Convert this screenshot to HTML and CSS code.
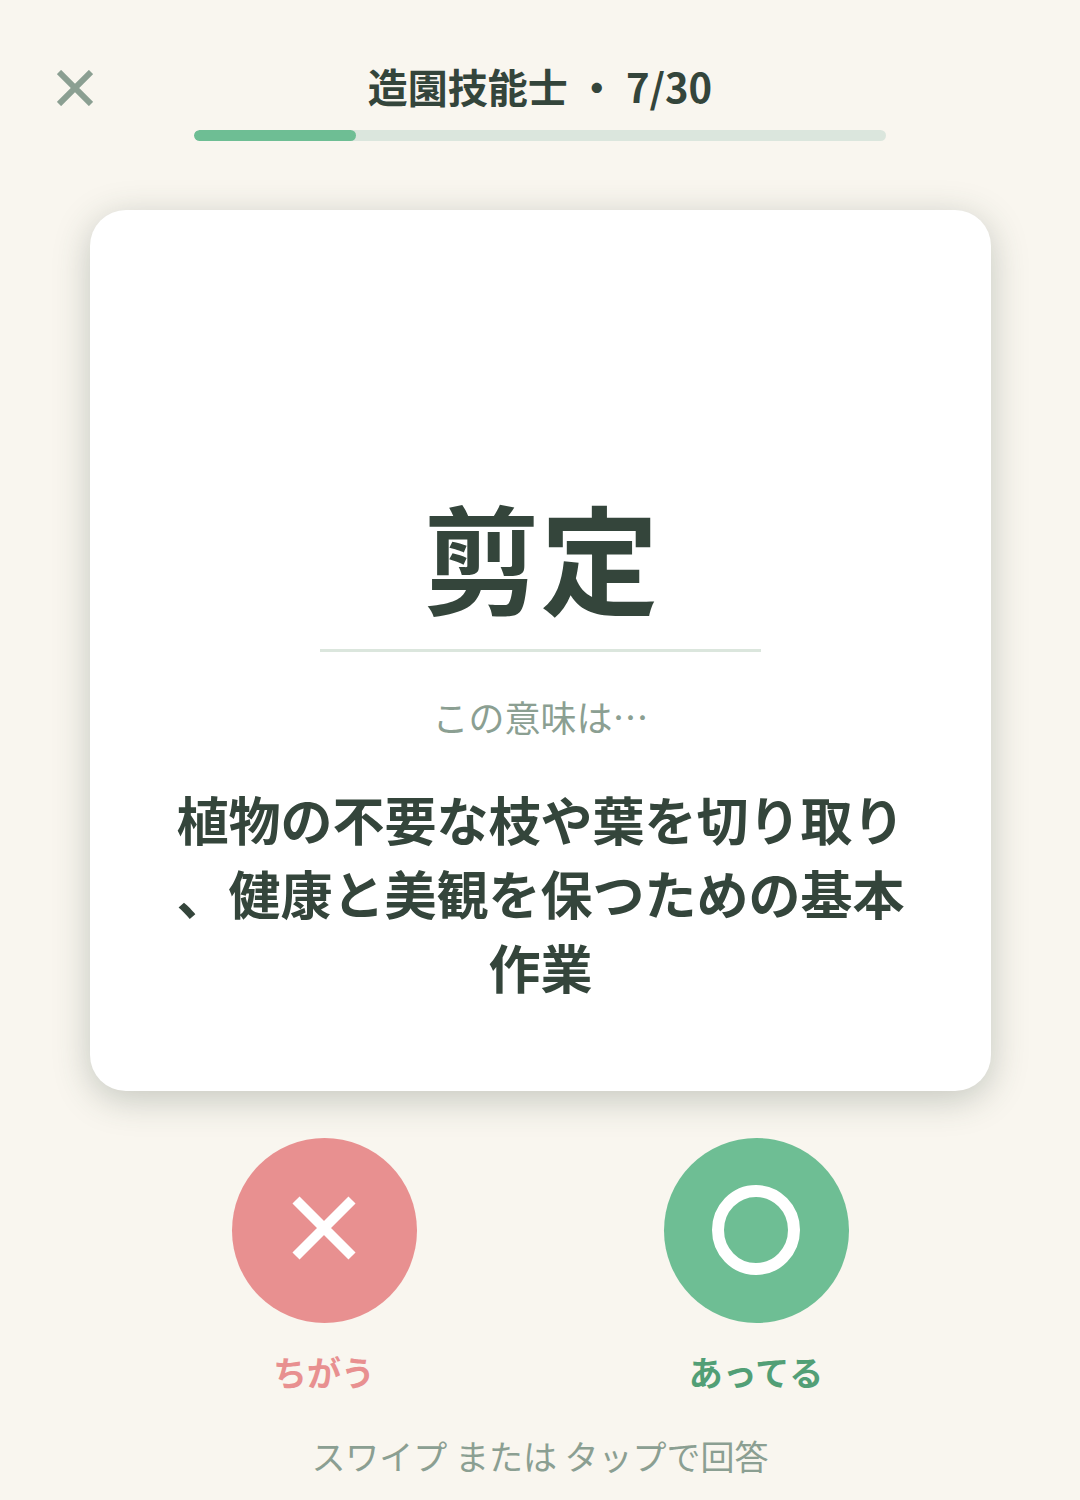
FILE: index.html
```html
<!DOCTYPE html>
<html lang="ja">
<head>
  <meta charset="UTF-8" />
  <meta name="viewport" content="width=device-width, initial-scale=1.0">
  <title>造園技能士</title>
  <link rel="stylesheet" href="styles.css">
</head>
<body>
  <header class="topbar">
    <button type="button" class="close" aria-label="閉じる">
      <svg viewBox="0 0 36 36" width="36" height="36" aria-hidden="true">
        <path d="M2 2 34 34M34 2 2 34" fill="none" stroke="currentColor" stroke-width="6"/>
      </svg>
    </button>
    <div class="status">
      <h1 id="deck-title">造園技能士 ・ 7/30</h1>
      <progress class="bar" value="7" max="30" aria-labelledby="deck-title"></progress>
    </div>
  </header>

  <main class="card">
    <h2 class="word">剪定</h2>
    <hr class="rule">
    <p class="prompt">この意味は…</p>
    <p class="meaning">植物の不要な枝や葉を切り取り、健康と美観を保つための基本作業</p>
  </main>

  <div class="answers">
    <button type="button" class="answer wrong">
      <span class="circle">
        <svg viewBox="0 0 92 92" width="92" height="92" aria-hidden="true">
          <path d="M18 15 74 71M74 15 18 71" fill="none" stroke="currentColor" stroke-width="10"/>
        </svg>
      </span>
      <span class="label">ちがう</span>
    </button>
    <button type="button" class="answer right">
      <span class="circle">
        <svg viewBox="0 0 92 92" width="92" height="92" aria-hidden="true">
          <ellipse cx="46" cy="45" rx="38" ry="39" fill="none" stroke="currentColor" stroke-width="12"/>
        </svg>
      </span>
      <span class="label">あってる</span>
    </button>
  </div>

  <p class="hint">スワイプ または タップで回答</p>
</body>
</html>
```
FILE: styles.css
```css
* { box-sizing: border-box; }
body {
  margin: 0;
  min-height: 100vh;
  display: flex;
  flex-direction: column;
  background: #f9f6ef;
  color: #34453b;
  font-family: "Noto Sans CJK JP", sans-serif;
}
h1, h2, p { margin: 0; }
button {
  padding: 0;
  border: none;
  background: none;
  font-family: inherit;
  cursor: pointer;
}
svg { display: block; }

.topbar {
  display: grid;
  grid-template-columns: 18% 64% 18%;
  align-items: start;
  padding-top: 58px;
}
.close {
  justify-self: start;
  margin-left: 57px;
  padding: 12px 0;
  color: #8b9f92;
}
.status {
  display: flex;
  flex-direction: column;
  gap: 16px;
}
h1 {
  font-size: 40px;
  line-height: 56px;
  font-weight: 700;
  text-align: center;
}
.bar {
  display: block;
  width: 100%;
  height: 11px;
  appearance: none;
  border: none;
  border-radius: 6px;
  overflow: hidden;
  background: #dbe6dd;
}
.bar::-webkit-progress-bar { background: #dbe6dd; }
.bar::-webkit-progress-value {
  background: #6ebe94;
  border-radius: 6px;
}

.card {
  flex: 1;
  display: flex;
  flex-direction: column;
  align-items: center;
  justify-content: flex-end;
  margin: 69px 89px 0 90px;
  padding: 80px 80px 87px;
  background: #fff;
  border-radius: 36px;
  box-shadow: 0 8px 36px rgba(52, 69, 59, 0.27);
  text-align: center;
}
.word {
  font-size: 118px;
  line-height: 140px;
  font-weight: 700;
}
.rule {
  width: 100%;
  max-width: 441px;
  height: 3px;
  margin: 24px 0 38px;
  border: none;
  background: #dbe6dd;
}
.prompt {
  font-size: 36px;
  line-height: 52px;
  color: #8b9f92;
}
.meaning {
  margin-top: 40px;
  font-size: 52px;
  line-height: 74px;
  font-weight: 700;
  line-break: anywhere;
}

.answers {
  display: grid;
  grid-template-columns: 1fr 1fr;
  margin-top: 47px;
  padding: 0 10%;
}
.answer {
  justify-self: center;
  display: flex;
  flex-direction: column;
  align-items: center;
  gap: 24px;
}
.circle {
  display: grid;
  place-items: center;
  width: 185px;
  height: 185px;
  border-radius: 50%;
}
.label {
  font-size: 34px;
  line-height: 50px;
  font-weight: 700;
}
.wrong { color: #e89090; }
.wrong .circle { background: #e89090; }
.right { color: #529f76; }
.right .circle { background: #6ebe94; }
.answer .circle { color: #fff; }

.hint {
  padding: 34px 0 19px;
  font-size: 34px;
  line-height: 50px;
  color: #8b9f92;
  text-align: center;
}
```
